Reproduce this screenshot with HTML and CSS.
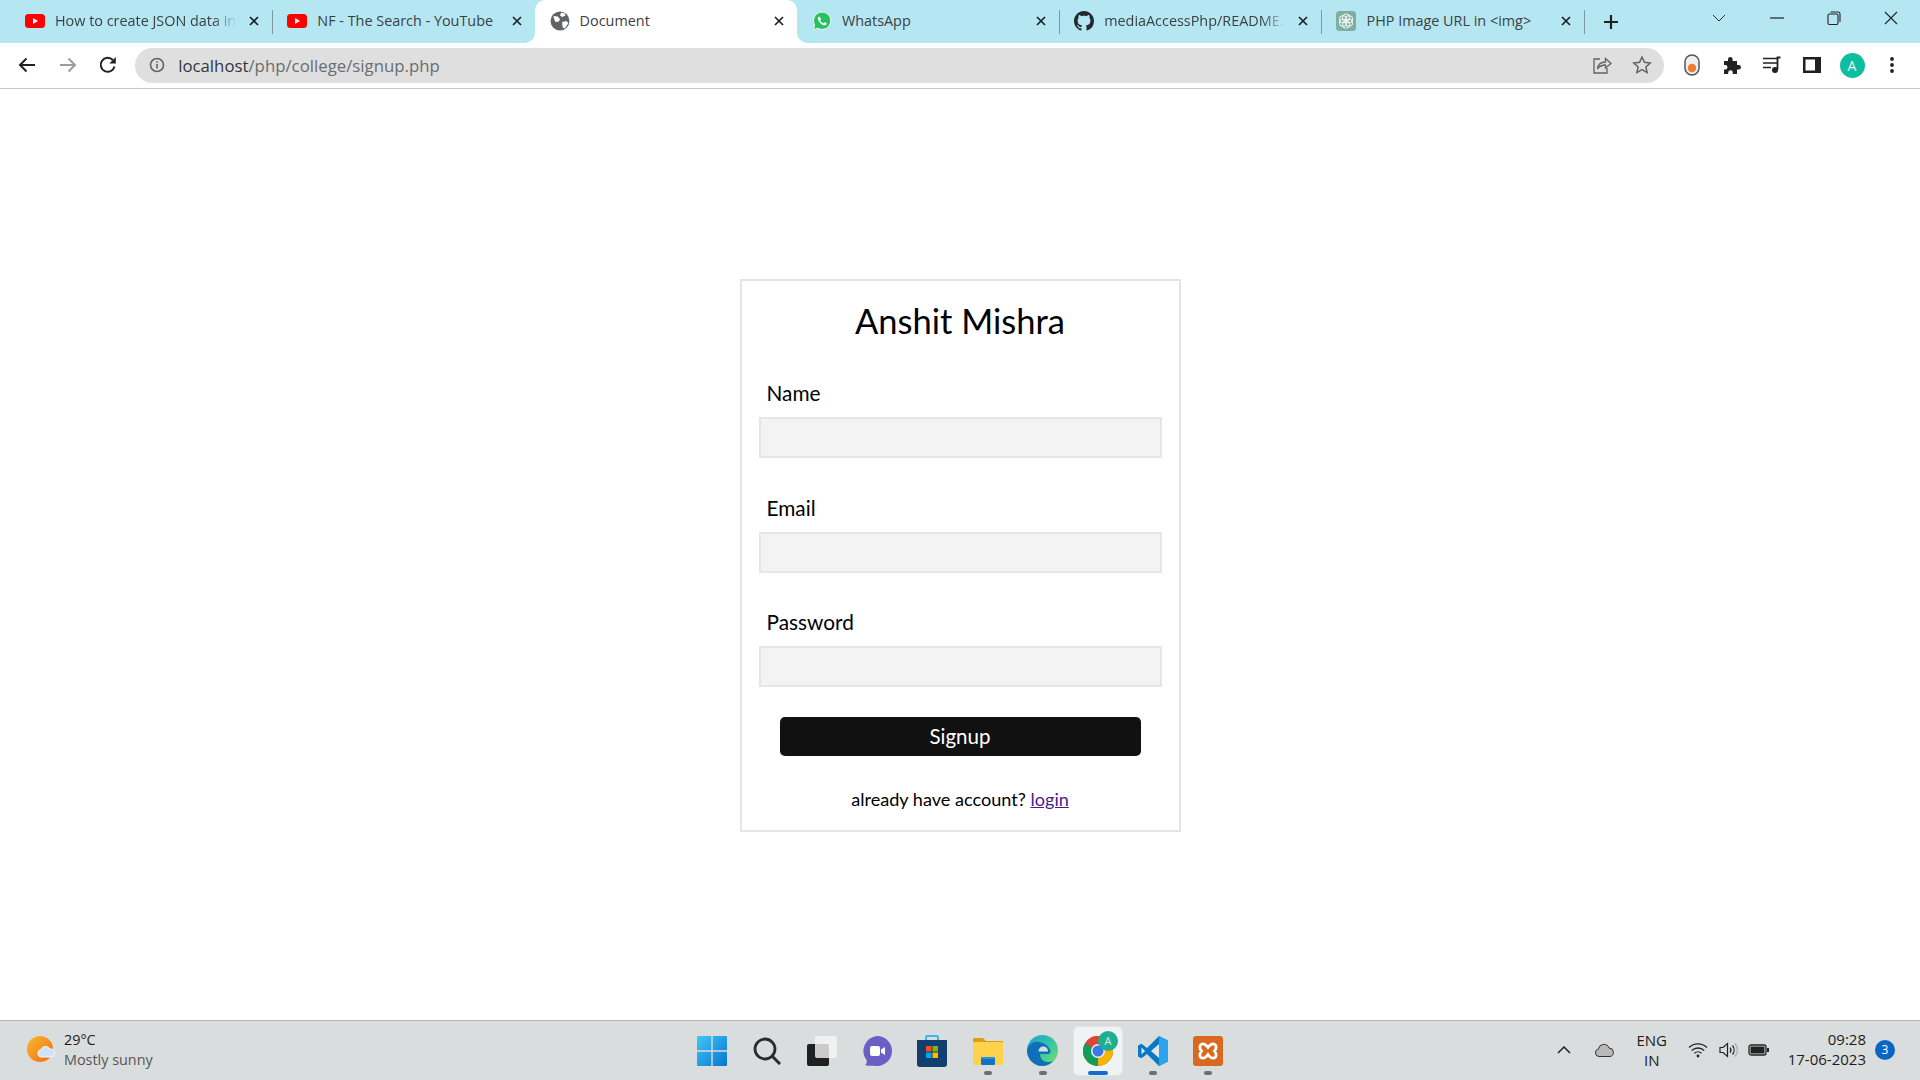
FILE: index.html
```html
<!DOCTYPE html>
<html lang="en">
<head>
<meta charset="utf-8">
<title>Document</title>
<link rel="stylesheet" href="styles.css">
</head>
<body>
<div class="screen">
  <header class="tabstrip">
    <div class="tabs">
      <div class="tab sep">
        <svg class="fav" viewBox="0 0 20 16"><rect y="1" width="20" height="14" rx="3.5" fill="#f00"/><path d="M8 5l5 3-5 3z" fill="#fff"/></svg>
        <span class="tab-title fade">How to create JSON data in</span>
        <svg class="close" viewBox="0 0 10 10"><path d="M1 1l8 8M9 1l-8 8"/></svg>
      </div>
      <div class="tab">
        <svg class="fav" viewBox="0 0 20 16"><rect y="1" width="20" height="14" rx="3.5" fill="#f00"/><path d="M8 5l5 3-5 3z" fill="#fff"/></svg>
        <span class="tab-title">NF - The Search - YouTube</span>
        <svg class="close" viewBox="0 0 10 10"><path d="M1 1l8 8M9 1l-8 8"/></svg>
      </div>
      <div class="tab active">
        <svg class="fav" viewBox="0 0 18 18"><circle cx="9" cy="9" r="8.5" fill="#5f6368"/><path d="M3 4.500l4 .5 2 2.500-1 2-3 .5-1-2zM10 1.500l3 .5 1 2-3 1.500-2-1.500zM11 10l4-1 1.500 2-3 4.500-2-.5-.5-3z" fill="#fff"/></svg>
        <span class="tab-title">Document</span>
        <svg class="close" viewBox="0 0 10 10"><path d="M1 1l8 8M9 1l-8 8"/></svg>
      </div>
      <div class="tab sep">
        <svg class="fav" viewBox="0 0 20 20"><path d="M1.500 18.500l1.200-4.400A8.600 8.600 0 1 1 6 17.300z" fill="#29c15f" stroke="#e9f5ee" stroke-width="1"/><path d="M7.200 5.400c-.5 0-1.300.7-1.300 2 0 2.800 3.700 6.700 6.700 6.900 1.300 0 2.200-.8 2.200-1.600 0-.4-2-1.500-2.400-1.400-.4.100-.7 1-1.100 1-.8 0-3-2-3.100-2.900 0-.4.8-.8.800-1.200 0-.4-1-2.800-1.800-2.800z" fill="#fff"/></svg>
        <span class="tab-title">WhatsApp</span>
        <svg class="close" viewBox="0 0 10 10"><path d="M1 1l8 8M9 1l-8 8"/></svg>
      </div>
      <div class="tab sep">
        <svg class="fav" viewBox="0 0 16 16"><path fill="#24292f" d="M8 0C3.58 0 0 3.58 0 8c0 3.54 2.29 6.53 5.47 7.59.4.07.55-.17.55-.38 0-.19-.01-.82-.01-1.49-2.01.37-2.53-.49-2.69-.94-.09-.23-.48-.94-.82-1.13-.28-.15-.68-.52-.01-.53.63-.01 1.08.58 1.23.82.72 1.21 1.87.87 2.33.66.07-.52.28-.87.51-1.07-1.78-.2-3.64-.89-3.64-3.95 0-.87.31-1.59.82-2.15-.08-.2-.36-1.02.08-2.12 0 0 .67-.21 2.2.82.64-.18 1.32-.27 2-.27.68 0 1.36.09 2 .27 1.53-1.04 2.2-.82 2.2-.82.44 1.1.16 1.92.08 2.12.51.56.82 1.27.82 2.15 0 3.07-1.87 3.75-3.65 3.95.29.25.54.73.54 1.48 0 1.07-.01 1.93-.01 2.2 0 .21.15.46.55.38A8.013 8.013 0 0016 8c0-4.42-3.58-8-8-8z"/></svg>
        <span class="tab-title fade">mediaAccessPhp/README.</span>
        <svg class="close" viewBox="0 0 10 10"><path d="M1 1l8 8M9 1l-8 8"/></svg>
      </div>
      <div class="tab sep">
        <svg class="fav" viewBox="0 0 20 20"><rect width="20" height="20" rx="3.500" fill="#7fae9e"/><g fill="none" stroke="#e8f2ee" stroke-width="1.100"><circle cx="10" cy="6.500" r="3.500"/><circle cx="13" cy="8.300" r="3.500"/><circle cx="13" cy="11.700" r="3.500"/><circle cx="10" cy="13.500" r="3.500"/><circle cx="7" cy="11.700" r="3.500"/><circle cx="7" cy="8.300" r="3.500"/></g></svg>
        <span class="tab-title">PHP Image URL in &lt;img&gt;</span>
        <svg class="close" viewBox="0 0 10 10"><path d="M1 1l8 8M9 1l-8 8"/></svg>
      </div>
    </div>
    <svg class="newtab" viewBox="0 0 16 16"><path d="M8 1v14M1 8h14"/></svg>
    <div class="winctl">
      <div class="winbtn"><svg width="14" height="8" viewBox="0 0 14 8"><path d="M1 1l6 6 6-6" fill="none" stroke="#333" stroke-width="1"/></svg></div>
      <div class="winbtn"><svg width="14" height="2" viewBox="0 0 14 2"><path d="M0 1h14" stroke="#222" stroke-width="1.200"/></svg></div>
      <div class="winbtn"><svg width="14" height="14" viewBox="0 0 14 14"><rect x="1" y="3" width="10" height="10.500" rx="1.500" fill="none" stroke="#222" stroke-width="1.100"/><path d="M3.500 1h7.500a2 2 0 0 1 2 2v8" fill="none" stroke="#222" stroke-width="1.100"/></svg></div>
      <div class="winbtn"><svg width="14" height="14" viewBox="0 0 14 14"><path d="M1 1l12 12M13 1L1 13" stroke="#222" stroke-width="1.100"/></svg></div>
    </div>
  </header>

  <nav class="toolbar">
    <div class="tool nav-tool"><svg width="18" height="16" viewBox="0 0 18 16"><path d="M17 8H2M8.500 1.500L2 8l6.500 6.500" fill="none" stroke="#202124" stroke-width="2"/></svg></div>
    <div class="tool nav-tool"><svg width="18" height="16" viewBox="0 0 18 16"><path d="M1 8h15M9.500 1.500L16 8l-6.500 6.500" fill="none" stroke="#9a9c9e" stroke-width="2"/></svg></div>
    <div class="tool nav-tool"><svg width="18" height="18" viewBox="0 0 18 18"><path d="M15.500 10.500A7 7 0 1 1 13.800 4" fill="none" stroke="#202124" stroke-width="2"/><path d="M16.800 1v6.500h-6.500z" fill="#202124"/></svg></div>
    <div class="omnibox">
      <svg class="info" width="16" height="16" viewBox="0 0 16 16"><circle cx="8" cy="8" r="6.500" fill="none" stroke="#5f6368" stroke-width="1.600"/><path d="M8 7v4.500M8 4.200v1.600" stroke="#5f6368" stroke-width="1.600"/></svg>
      <span class="url"><span class="host">localhost</span>/php/college/signup.php</span>
      <svg class="omni-icon" width="20" height="20" viewBox="0 0 20 20"><path d="M8 4H2v14h13v-5" fill="none" stroke="#5f6368" stroke-width="1.300"/><path d="M5.500 14c.5-4.500 3.500-7 8-7V3.500L19 8.500 13.500 13V10c-3.500 0-6 1-8 4z" fill="none" stroke="#5f6368" stroke-width="1.300"/></svg>
      <svg class="omni-icon" width="20" height="20" viewBox="0 0 20 20"><path d="M10 2l2.400 5.300 5.800.7-4.300 3.900 1.200 5.700L10 14.700l-5.100 2.900 1.200-5.700L1.800 8l5.800-.7z" fill="none" stroke="#5f6368" stroke-width="1.500"/></svg>
    </div>
    <div class="tool"><svg width="16" height="22" viewBox="0 0 16 22"><rect x="1" y="1" width="14" height="20" rx="7" fill="#eee" stroke="#555" stroke-width="1.500"/><circle cx="8" cy="14" r="4.200" fill="#f47b2a"/></svg></div>
    <div class="tool"><svg width="18" height="18" viewBox="0 0 18 18"><path d="M1 5h4V3.200a2.300 2.300 0 0 1 4.600 0V5h4.400v4h1.700a2.300 2.300 0 0 1 0 4.600H14V18H9.800v-1.500a2.300 2.300 0 0 0-4.600 0V18H1v-4.500h1.200a2.300 2.300 0 0 0 0-4.600H1z" fill="#202124"/></svg></div>
    <div class="tool"><svg width="20" height="18" viewBox="0 0 20 18"><path d="M1 2.500h14M1 7h14M1 11.500h8" stroke="#202124" stroke-width="1.700"/><path d="M18.500 1.500h-3v12" fill="none" stroke="#202124" stroke-width="1.800"/><circle cx="13" cy="14" r="3" fill="#202124"/></svg></div>
    <div class="tool"><svg width="18" height="16" viewBox="0 0 18 16"><path fill-rule="evenodd" d="M0 0h18v16H0zM2.500 2.500v11H12v-11z" fill="#202124"/></svg></div>
    <div class="tool"><span class="avatar">A</span></div>
    <div class="tool"><svg width="4" height="18" viewBox="0 0 4 18"><circle cx="2" cy="3" r="1.900" fill="#202124"/><circle cx="2" cy="9" r="1.900" fill="#202124"/><circle cx="2" cy="15" r="1.900" fill="#202124"/></svg></div>
  </nav>

  <main class="page">
    <form class="card">
      <h1 class="brand">Anshit Mishra</h1>
      <div class="field"><label class="lbl">Name</label><div class="input"></div></div>
      <div class="field"><label class="lbl">Email</label><div class="input"></div></div>
      <div class="field"><label class="lbl">Password</label><div class="input"></div></div>
      <div class="submit">Signup</div>
      <p class="alt">already have account? <a href="#" class="alt-link">login</a></p>
    </form>
  </main>

  <footer class="taskbar">
    <div class="weather">
      <svg width="28" height="28" viewBox="0 0 28 28"><defs><linearGradient id="sun" x1="0" y1="0" x2="1" y2="1"><stop offset="0" stop-color="#f7b92c"/><stop offset="1" stop-color="#f26b12"/></linearGradient></defs><circle cx="13" cy="13" r="13" fill="url(#sun)"/><path d="M13 21a4 4 0 0 1 1-7.500 5 5 0 0 1 9-.5 4 4 0 0 1 1 8z" fill="#cfe2f7" stroke="#f5f8fc" stroke-width="1"/></svg>
      <div class="weather-text"><span class="temp">29°C</span><span class="cond">Mostly sunny</span></div>
    </div>
    <div class="apps">
      <div class="app"><svg width="30" height="30" viewBox="0 0 30 30"><defs><linearGradient id="win" x1="0" y1="0" x2="1" y2="1"><stop offset="0" stop-color="#3fc8f8"/><stop offset="1" stop-color="#0a74cf"/></linearGradient></defs><path d="M1 0h13.300v14.300H0V1a1 1 0 0 1 1-1zM15.700 0H29a1 1 0 0 1 1 1v13.300H15.700zM0 15.700h14.300V30H1a1 1 0 0 1-1-1zM15.700 15.700H30V29a1 1 0 0 1-1 1H15.700z" fill="url(#win)"/></svg></div>
      <div class="app"><svg width="28" height="28" viewBox="0 0 28 28"><circle cx="12" cy="12" r="10" fill="none" stroke="#2b2b2b" stroke-width="2.800"/><path d="M19 19l8 8" stroke="#2b2b2b" stroke-width="3"/></svg></div>
      <div class="app"><svg width="30" height="30" viewBox="0 0 30 30"><rect y="8" width="22" height="22" rx="2" fill="#1f1f1f"/><rect x="8" width="22" height="22" rx="2" fill="#f6f6f6" fill-opacity=".8"/></svg></div>
      <div class="app"><svg width="30" height="30" viewBox="0 0 30 30"><path d="M15 0a15 15 0 1 1-3 29.700C9 30 6 30 3 29c2-1.500 2-3.500 1.500-5A15 15 0 0 1 15 0z" fill="#6b5fc6"/><rect x="8" y="10" width="10" height="10" rx="2" fill="#fff"/><path d="M19 13.500l4-2.500v8l-4-2.500z" fill="#fff"/></svg></div>
      <div class="app"><svg width="30" height="32" viewBox="0 0 30 32"><path d="M9 6V2.500A1.500 1.500 0 0 1 10.500 1h9A1.500 1.500 0 0 1 21 2.500V6" fill="none" stroke="#3ab8e8" stroke-width="2"/><path d="M0 5h30v24a3 3 0 0 1-3 3H3a3 3 0 0 1-3-3z" fill="#123f70"/><rect x="9" y="11" width="5.500" height="5.500" fill="#f25022"/><rect x="15.500" y="11" width="5.500" height="5.500" fill="#7fba00"/><rect x="9" y="17.500" width="5.500" height="5.500" fill="#00a4ef"/><rect x="15.500" y="17.500" width="5.500" height="5.500" fill="#ffb900"/></svg></div>
      <div class="app"><svg width="30" height="28" viewBox="0 0 30 28"><path d="M0 2a1 1 0 0 1 1-1h9l3 3h17v6H0z" fill="#dca110"/><rect y="5" width="30" height="23" rx="1" fill="#fdd34e"/><rect x="8" y="20" width="14" height="8" rx="1" fill="#1273c4"/><rect x="8" y="20" width="14" height="2" fill="#2b95e0"/></svg><i class="dot"></i></div>
      <div class="app"><svg width="31" height="31" viewBox="0 0 31 31"><defs><linearGradient id="edge" x1="0" y1="0" x2="1" y2="1"><stop offset="0" stop-color="#1f9fd8"/><stop offset=".55" stop-color="#35c9a0"/><stop offset="1" stop-color="#84e06c"/></linearGradient></defs><circle cx="15.500" cy="15.500" r="15.500" fill="url(#edge)"/><path d="M0 15.500C1 9 7 6 12 7c6 1 10 4 11.500 9 .5 2-1 3-3 3H13c0 4.500 3 8 8 8 2 0 4-.5 5-1-3 3.500-7 5-11 5C7 31 0 24 0 15.500z" fill="#0f6fb8"/><path d="M11.500 16.500c0-3 2-5 4.500-5 3 0 5 2 5 5z" fill="#dadddd"/></svg><i class="dot"></i></div>
      <div class="app app-on"><svg width="30" height="30" viewBox="0 0 30 30"><circle cx="15" cy="15" r="15" fill="#db4437"/><path d="M15 15L2 7.500A15 15 0 0 0 15 30z" fill="#0f9d58"/><path d="M15 15V30A15 15 0 0 0 28 7.500z" fill="#f4b400"/><path d="M2 7.500A15 15 0 0 1 28 7.500H15z" fill="#db4437"/><circle cx="15" cy="15" r="7" fill="#e8f0fe"/><circle cx="15" cy="15" r="5.500" fill="#3b78e7"/></svg><span class="chip">A</span><i class="bar"></i></div>
      <div class="app"><svg width="30" height="30" viewBox="0 0 30 30"><path d="M21 0l9 4.500v21L21 30 9 18l-5.500 4.200L0 20.500v-11L3.500 7.800 9 12z" fill="#0b78c6"/><path d="M21 0l9 4.500v21L21 30z" fill="#2aa4ee"/><path d="M21 8v14l-8-7z" fill="#e3e6e7"/><path d="M3.500 11.500V18.500L7 15z" fill="#e3e6e7"/></svg><i class="dot"></i></div>
      <div class="app"><svg width="30" height="30" viewBox="0 0 30 30"><rect width="30" height="30" rx="3" fill="#d9691f"/><path d="M9 8c3-1 4.500 1.500 6 3.500C16.500 9.500 18 7 21 8c3 1 2.500 5 .5 7 2 2 2.500 6-.5 7-3 1-4.500-1.500-6-3.500C13.500 20.500 12 23 9 22c-3-1-2.500-5-.5-7-2-2-2.500-6 .5-7z" fill="none" stroke="#fff" stroke-width="2.800"/></svg><i class="dot"></i></div>
    </div>
    <div class="tray">
      <svg class="tray-chev" width="14" height="8" viewBox="0 0 14 8"><path d="M1 7l6-6 6 6" fill="none" stroke="#222" stroke-width="1.500"/></svg>
      <svg class="tray-cloud" width="21" height="14" viewBox="0 0 21 14"><path d="M5 13.500a3.800 3.800 0 0 1-.6-7.500A5.500 5.500 0 0 1 15 5a4.300 4.300 0 0 1 1 8.500z" fill="#b9b9b9" stroke="#333" stroke-width="1"/></svg>
      <div class="lang"><span>ENG</span><span>IN</span></div>
      <svg class="tray-wifi" width="20" height="16" viewBox="0 0 20 16"><g fill="none" stroke="#222" stroke-width="1.300"><path d="M1 5.500a13 13 0 0 1 18 0M3.800 8.500a9 9 0 0 1 12.400 0M6.500 11.300a5 5 0 0 1 7 0"/></g><circle cx="10" cy="14" r="1.400" fill="#222"/></svg>
      <svg class="tray-vol" width="20" height="16" viewBox="0 0 20 16"><path d="M1 5.500h3L8.500 1.500v13L4 10.500H1z" fill="none" stroke="#222" stroke-width="1.200"/><path d="M11 5.500a4 4 0 0 1 0 5M13.500 3.500a7 7 0 0 1 0 9" fill="none" stroke="#222" stroke-width="1.200"/><path d="M16 1.500a10 10 0 0 1 0 13" fill="none" stroke="#aaa" stroke-width="1.200"/></svg>
      <svg class="tray-batt" width="21" height="12" viewBox="0 0 21 12"><rect x="1" y="1" width="17" height="10" rx="2" fill="none" stroke="#222" stroke-width="1.300"/><rect x="2.500" y="2.500" width="14" height="7" fill="#222"/><rect x="19" y="4" width="2" height="4" fill="#222"/></svg>
      <div class="clock"><span>09:28</span><span>17-06-2023</span></div>
      <span class="badge">3</span>
    </div>
  </footer>
</div>
</body>
</html>
```
FILE: styles.css
```css
* { box-sizing: border-box; }
html, body { margin: 0; padding: 0; height: 100%; }
body { background: #fff; font-family: "Open Sans", "Noto Sans", sans-serif; overflow: hidden; }
.screen { width: 1920px; height: 1080px; display: flex; flex-direction: column; }

/* tab strip */
.tabstrip { height: 43px; background: #b5e7f3; display: flex; align-items: stretch; padding-left: 10px; flex: none; }
.tabs { display: flex; }
.tab { width: 262.3px; position: relative; display: flex; align-items: center; padding: 0 10px 2px 15px; color: #3c4043; }
.tab.active { background: #fff; border-radius: 10px 10px 0 0; }
.tab.active::before, .tab.active::after { content: ""; position: absolute; bottom: 0; width: 10px; height: 10px; }
.tab.active::before { left: -10px; background: radial-gradient(circle at 0 0, transparent 9.500px, #fff 10px); }
.tab.active::after { right: -10px; background: radial-gradient(circle at 100% 0, transparent 9.500px, #fff 10px); }
.tab.sep::after { content: ""; position: absolute; right: -1px; top: 10px; height: 24px; width: 1px; background: #7f9aa2; }
.fav { width: 20px; height: 20px; flex: none; margin-right: 10px; }
.tab-title { flex: 1; font-size: 14.4px; white-space: nowrap; overflow: hidden; min-width: 0; }
.tab-title.fade { -webkit-mask-image: linear-gradient(90deg, #000 85%, transparent 98%); mask-image: linear-gradient(90deg, #000 85%, transparent 98%); }
.close { width: 10px; height: 10px; flex: none; margin-left: 8px; margin-right: 3px; }
.close path { stroke: #202124; stroke-width: 1.700; fill: none; }
.newtab { width: 16px; height: 16px; margin: 14px 0 0 19px; flex: none; }
.newtab path { stroke: #202124; stroke-width: 2.200; fill: none; }
.winctl { margin-left: auto; display: flex; align-items: flex-start; }
.winbtn { width: 57.300px; height: 36px; display: flex; align-items: center; justify-content: center; }

/* toolbar */
.toolbar { height: 46px; flex: none; display: flex; align-items: center; padding: 0 8px 1px 7px; background: #fff; border-bottom: 1px solid #c9c9c9; }
.tool { width: 40px; height: 36px; flex: none; display: flex; align-items: center; justify-content: center; }
.nav-tool { width: 40.400px; }
.omnibox { flex: 1; height: 35px; margin: 0 8px 0 7px; border-radius: 18px; background: #dfdfdf; display: flex; align-items: center; padding: 0 12px 0 14px; }
.info { flex: none; margin-right: 13px; }
.url { flex: 1; font-size: 16.800px; color: #6a6c70; white-space: nowrap; }
.host { color: #35363a; }
.omni-icon { flex: none; margin-left: 20px; }
.avatar { width: 25px; height: 25px; border-radius: 50%; background: #0fbd9f; color: #e8f8f5; font-size: 14px; display: flex; align-items: center; justify-content: center; }

/* page */
.page { flex: 1; min-height: 0; display: flex; align-items: center; justify-content: center; padding-top: 2px; }
.card { width: 441px; border: 2px solid #e5e5e5; padding: 0 17px 17px; font-family: Lato, "Open Sans", sans-serif; color: #000; display: flex; flex-direction: column; }
.brand { margin: 18px 0 0; height: 44px; line-height: 44px; font-size: 34.500px; font-weight: 400; text-align: center; }
.field { margin-top: 35px; }
.field + .field { margin-top: 34.700px; }
.lbl { display: block; height: 30px; line-height: 30px; font-size: 20.800px; margin: 0 0 9px 8px; }
.input { height: 41px; background: #f3f3f3; border: 2px solid #e6e6e6; }
.submit { width: 361px; height: 39px; margin: 29.600px auto 0; background: #111; color: #fff; border-radius: 5px; font-size: 20.500px; line-height: 39px; text-align: center; }
.alt { margin: 29px 0 0; height: 28px; line-height: 28px; font-size: 18.100px; text-align: center; }
.alt-link { color: #4b1a8c; text-decoration: underline; }

/* taskbar */
.taskbar { height: 60px; flex: none; background: #dadddd; border-top: 1px solid #b4b6b6; display: grid; grid-template-columns: 1fr auto 1fr; align-items: center; }
.weather { display: flex; align-items: center; padding: 0 0 2px 27px; color: #1c1c1c; }
.weather-text { display: flex; flex-direction: column; margin-left: 9px; font-size: 14.400px; line-height: 20px; }
.cond { color: #555; }
.apps { display: flex; gap: 7.200px; }
.app { width: 48px; height: 48px; position: relative; display: flex; align-items: center; justify-content: center; border-radius: 5px; }
.app-on { background: #f0f3f4; box-shadow: 0 0 0 1px #e3e6e7; }
.chip { position: absolute; right: 4px; top: 4px; width: 20px; height: 20px; border-radius: 50%; background: #1fae8f; color: #cfeee6; font-size: 11px; display: flex; align-items: center; justify-content: center; }
.dot { position: absolute; bottom: 0; left: 20px; width: 8px; height: 4px; border-radius: 2px; background: #6b6f72; }
.bar { position: absolute; bottom: 0; left: 14px; width: 20px; height: 4px; border-radius: 2px; background: #0f6fd0; }
.tray { display: flex; align-items: center; justify-content: flex-end; color: #1c1c1c; font-size: 15px; padding: 0 25px 2px 0; }
.tray-chev { margin-right: 23px; }
.tray-cloud { margin-right: 22px; }
.lang { display: flex; flex-direction: column; align-items: center; line-height: 20px; width: 30px; margin-right: 21px; }
.tray-wifi { margin-right: 11px; }
.tray-vol { margin-right: 9px; }
.clock { display: flex; flex-direction: column; align-items: flex-end; line-height: 19.500px; margin-left: 19px; }
.badge { width: 20px; height: 20px; margin-left: 9px; border-radius: 50%; background: #0a66c2; color: #fff; font-size: 12px; display: flex; align-items: center; justify-content: center; }
```
